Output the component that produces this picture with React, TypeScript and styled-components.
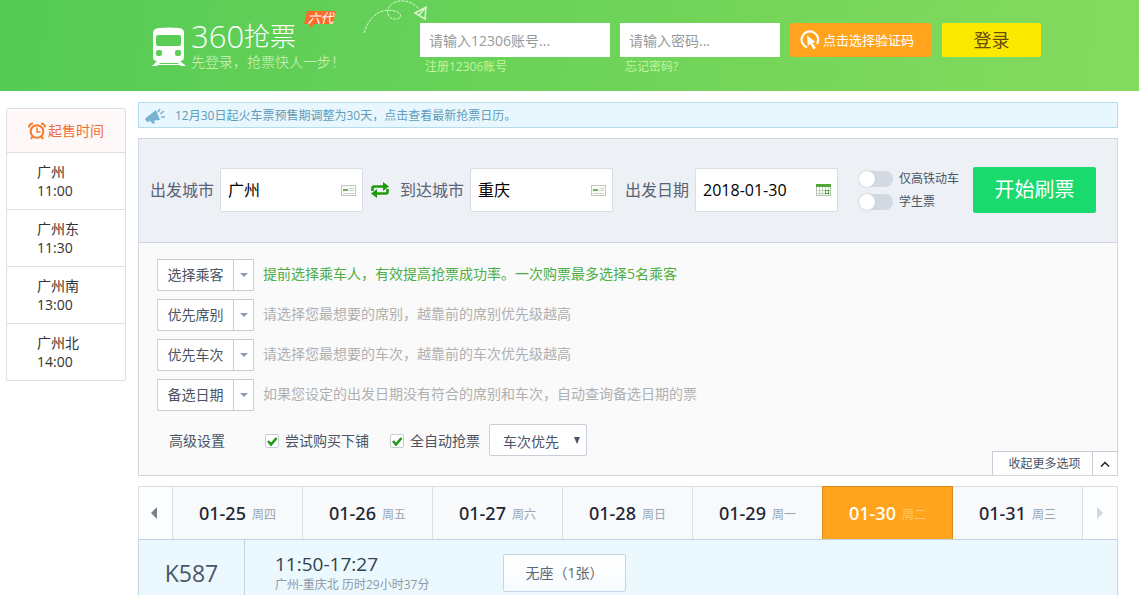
import React, { useState } from "react";
import styled, { createGlobalStyle } from "styled-components";

const GlobalStyle = createGlobalStyle`
  * { box-sizing: border-box; }
  html { scrollbar-width: none; }
  body {
    margin: 0;
    background: #fff;
    color: #333;
    font: 14px/20px "Open Sans", "Noto Sans CJK SC", sans-serif;
    text-spacing-trim: space-all;
  }
  button, input, select { font: inherit; color: inherit; margin: 0; }
  button { cursor: pointer; padding: 0; border: 0; background: none; text-spacing-trim: inherit; }
  a { text-decoration: none; }
  svg { display: block; flex: none; }
  ul { list-style: none; margin: 0; padding: 0; }
`;

const Header = styled.header`
  display: flex;
  align-items: flex-start;
  height: 91px;
  padding: 23px 20px 0 152px;
  background: linear-gradient(100deg, #54cb55, #85db5d);
`;

const Brand = styled.div`
  position: relative;
  display: flex;
  gap: 5px;
  width: 268px;
  flex: none;
  color: #fff;
`;

const TrainIcon = styled.svg`
  margin-top: 4px;
`;

const BrandName = styled.h1`
  margin: 0;
  display: flex;
  align-items: center;
  height: 26px;
  font-size: 26px;
  line-height: 26px;
  font-weight: 300;
`;

const BrandNumber = styled.span`
  font-size: 31px;
`;

const Tagline = styled.p`
  margin: 3px 0 0;
  font-weight: 300;
  color: #d3f5c8;
  white-space: nowrap;
`;

const Badge = styled.span`
  position: absolute;
  left: 152px;
  top: -13px;
  width: 33px;
  height: 18px;
  font-size: 13px;
  line-height: 16px;
  text-align: center;
  font-style: italic;
  svg { position: absolute; inset: 0; z-index: -1; }
  isolation: isolate;
`;

const PlaneTrail = styled.svg`
  position: absolute;
  left: 210px;
  top: -23px;
`;

const LoginForm = styled.form`
  display: flex;
  align-items: flex-start;
  gap: 10px;
`;

const Credential = styled.div<{ $width: number }>`
  width: ${(p) => p.$width}px;
  a {
    display: block;
    margin-left: 5px;
    font-size: 12px;
    line-height: 20px;
    color: #c3f59f;
  }
`;

const CredentialInput = styled.input`
  display: block;
  width: 100%;
  height: 34px;
  padding: 0 9px;
  border: 0;
  background: #fff;
  outline: none;
  &::placeholder { color: #999; opacity: 1; }
`;

const CaptchaButton = styled.button`
  display: flex;
  align-items: center;
  gap: 3px;
  width: 141px;
  height: 34px;
  padding-left: 10px;
  border-radius: 2px;
  background: #ffa41c;
  color: #fff;
  font-size: 13px;
`;

const LoginButton = styled.button`
  width: 99px;
  height: 34px;
  margin-left: 1px;
  border-radius: 2px;
  background: #fbe900;
  color: #6b4a08;
  font-size: 18px;
`;

const Page = styled.div`
  display: flex;
  align-items: flex-start;
  gap: 12px;
  padding: 11px 21px 0 6px;
`;

const Sidebar = styled.aside`
  width: 120px;
  flex: none;
  margin-top: 6px;
  border: 1px solid #dcdfe3;
  border-radius: 2px;
`;

const SidebarTitle = styled.h2`
  display: flex;
  align-items: center;
  gap: 2px;
  height: 43px;
  margin: 0;
  padding-left: 21px;
  background: #fef9f8;
  color: #f26a36;
  font-size: 14px;
  font-weight: 400;
`;

const SaleTime = styled.li`
  padding: 9px 0 9px 30px;
  border-top: 1px solid #dcdfe3;
  line-height: 19px;
  span, time { display: block; }
`;

const Main = styled.main`
  flex: 1;
  min-width: 0;
`;

const Notice = styled.a`
  display: flex;
  align-items: center;
  gap: 9px;
  height: 26px;
  padding: 2px 0 0 6px;
  border: 1px solid #b5dcea;
  background: #e8f7fd;
  color: #5d9cba;
  font-size: 12px;
`;

const Panel = styled.section`
  margin-top: 10px;
  border: 1px solid #cfd6de;
  background: #fafafa;
  color: #4a5466;
`;

const SearchBar = styled.form`
  display: flex;
  align-items: center;
  height: 104px;
  padding: 0 0 1px 11px;
  border-bottom: 1px solid #ccd3dd;
  background: #edf0f5;
`;

const Field = styled.label`
  display: flex;
  align-items: center;
  gap: 6px;
  font-size: 16px;
  color: #5a6375;
  white-space: nowrap;
`;

const FieldBox = styled.span`
  display: flex;
  align-items: center;
  width: 143px;
  height: 44px;
  padding: 0 6px 0 7px;
  border: 1px solid #d9dee6;
  border-radius: 2px;
  background: #fff;
`;

const FieldInput = styled.input`
  flex: 1;
  min-width: 0;
  padding: 0;
  border: 0;
  outline: none;
  background: none;
  color: #000;
`;

const SwapButton = styled.button`
  margin: 0 11px 0 8px;
`;

const DateField = styled(Field)`
  margin-left: 12px;
`;

const Switches = styled.div`
  display: grid;
  gap: 3px;
  margin: 0 14px 0 21px;
`;

const SwitchLabel = styled.label`
  display: flex;
  align-items: center;
  gap: 6px;
  font-size: 12px;
`;

const Switch = styled.input`
  appearance: none;
  display: flex;
  width: 34px;
  height: 16px;
  border-radius: 8px;
  background: #d3d9e2;
  &::before {
    content: "";
    width: 16px;
    height: 16px;
    border-radius: 50%;
    background: #fff;
    box-shadow: 0 0 2px #b4bcc8;
  }
  &:checked { background: #16da6d; justify-content: flex-end; }
`;

const StartButton = styled.button`
  width: 123px;
  height: 46px;
  border-radius: 2px;
  background: #18da6d;
  color: #fff;
  font-size: 20px;
`;

const Options = styled.div`
  padding: 16px 0 0 18px;
`;

const OptionRows = styled.div`
  display: grid;
  gap: 8px;
`;

const OptionRow = styled.div`
  display: flex;
  gap: 9px;
`;

const OptionButton = styled.button`
  display: flex;
  align-items: stretch;
  width: 97px;
  height: 32px;
  border: 1px solid #c6ced9;
  background: #fff;
  line-height: 30px;
`;

const OptionName = styled.span`
  flex: 1;
`;

const OptionArrow = styled.span`
  display: flex;
  align-items: center;
  justify-content: center;
  width: 20px;
  border-left: 1px solid #c6ced9;
`;

const Hint = styled.span<{ $active?: boolean }>`
  line-height: 30px;
  color: ${(p) => (p.$active ? "#4cae45" : "#b0b0b0")};
`;

const Advanced = styled.div`
  display: flex;
  align-items: flex-start;
  height: 51px;
  margin-top: 13px;
  line-height: 34px;
`;

const AdvancedTitle = styled.span`
  margin: 0 40px 0 12px;
`;

const CheckLabel = styled.label`
  display: flex;
  align-items: center;
  gap: 6px;
  margin-right: 21px;
  & + & { margin-right: 9px; }
`;

const CheckMark = styled.span`
  display: grid;
  width: 14px;
  height: 14px;
  > * { grid-area: 1 / 1; }
  svg { pointer-events: none; visibility: hidden; }
  input:checked + svg { visibility: visible; }
`;

const CheckInput = styled.input`
  appearance: none;
  width: 14px;
  height: 14px;
  border: 1px solid #c9ced6;
  border-radius: 2px;
  background: #fff;
`;

const SelectBox = styled.span`
  display: grid;
  align-items: center;
  width: 98px;
  > * { grid-area: 1 / 1; }
  svg { justify-self: end; margin-right: 7px; pointer-events: none; }
`;

const Select = styled.select`
  appearance: none;
  width: 100%;
  height: 32px;
  padding: 0 13px;
  border: 1px solid #c9cfd8;
  border-radius: 2px;
  background: #fff;
`;

const CollapseButton = styled.button`
  display: flex;
  align-self: flex-end;
  width: 125px;
  height: 24px;
  margin-left: auto;
  border: solid #c6ced9;
  border-width: 1px 0 0 1px;
  background: #fff;
  font-size: 12px;
  line-height: 24px;
`;

const CollapseText = styled.span`
  flex: 1;
  padding-left: 4px;
`;

const CollapseArrow = styled.span`
  display: flex;
  align-items: center;
  justify-content: center;
  width: 25px;
  border-left: 1px solid #c6ced9;
`;

const DateBar = styled.nav`
  display: flex;
  height: 54px;
  margin-top: 10px;
  border: 1px solid #d8dee5;
  border-bottom-color: #c3d3e3;
`;

const PageArrow = styled.button<{ $next?: boolean }>`
  display: flex;
  align-items: center;
  justify-content: center;
  width: ${(p) => (p.$next ? 35 : 33)}px;
  padding-right: ${(p) => (p.$next ? 0 : 3)}px;
  border-left: ${(p) => (p.$next ? "1px solid #d8dee5" : "0")};
  background: #fcfdfe;
`;

const DateTab = styled.button<{ $active: boolean }>`
  display: flex;
  flex: 1;
  align-items: center;
  justify-content: center;
  gap: 6px;
  position: relative;
  z-index: ${(p) => (p.$active ? 1 : 0)};
  border-left: 1px solid ${(p) => (p.$active ? "#d68b1d" : "#d8dee5")};
  background: ${(p) => (p.$active ? "#ffa41c" : "#f8f9fb")};
  box-shadow: ${(p) => (p.$active ? "1px -1px 0 #d68b1d, 0 -1px 0 #d68b1d, 1px 0 0 #d68b1d" : "none")};
  color: ${(p) => (p.$active ? "#fff" : "#1f2833")};
  font-family: "Noto Sans", "Noto Sans CJK SC", sans-serif;
  font-size: 18px;
  font-weight: 500;
  small {
    margin-top: 4px;
    font-size: 12px;
    font-weight: 400;
    color: ${(p) => (p.$active ? "#ffc873" : "#9aa5b1")};
  }
`;

const Train = styled.article`
  display: flex;
  height: 67px;
  border: solid #c3d3e3;
  border-width: 0 1px 1px;
  background: #ebf8fe;
`;

const TrainNumber = styled.h3`
  width: 106px;
  margin: 0;
  border-right: 1px solid #c3d3e3;
  text-align: center;
  font-size: 23px;
  line-height: 66px;
  font-weight: 400;
  color: #4a5664;
`;

const TrainTimes = styled.div`
  width: 228px;
  padding: 14px 0 0 30px;
  color: #34404e;
  font-size: 19px;
  line-height: 20px;
  p { margin: 0; font-size: 12px; line-height: 22px; color: #8c99a6; }
`;

const SeatButton = styled.button`
  width: 123px;
  height: 38px;
  margin: 14px 0 0 30px;
  border: 1px solid #c4d5e6;
  border-radius: 2px;
  background: linear-gradient(#fff, #f7fbfe);
  color: #5d6773;
`;

const CardIcon = () => (
  <svg width="15" height="11" viewBox="0 0 15 11">
    <rect x=".5" y=".5" width="14" height="10" fill="#fbfcfa" stroke="#c3c8bf" />
    <path d="M2 4h5v2H2z" fill="#6fae5a" />
    <path d="M8 3.500h5M8 5.500h5M2 8.500h11" stroke="#cdd5c8" />
  </svg>
);

const CalendarIcon = () => (
  <svg width="15" height="12" viewBox="0 0 15 12">
    <rect x=".5" y=".5" width="14" height="11" fill="#fff" stroke="#b5c2ae" />
    <path d="M0 0h15v3H0z" fill="#51a637" />
    <path d="M3.500 3v9M6.500 3v9M9.500 3v9M12.500 3v9M0 6.500h15M0 9.500h15" stroke="#c3cfbd" />
    <rect x="9.500" y="6.500" width="3" height="3" fill="#fff" stroke="#51a637" />
  </svg>
);

const Caret = ({ color, w = 8, h = 4 }: { color: string; w?: number; h?: number }) => (
  <svg width={w} height={h} viewBox={`0 0 ${w} ${h}`}>
    <path d={`M0 0h${w}L${w / 2} ${h}z`} fill={color} />
  </svg>
);

const Tick = () => (
  <svg width="14" height="14" viewBox="0 0 14 14">
    <path d="M3 7l3 3.500L11.500 4" fill="none" stroke="#1c9a12" strokeWidth="2.500" />
  </svg>
);

const saleTimes = [
  ["广州", "11:00"],
  ["广州东", "11:30"],
  ["广州南", "13:00"],
  ["广州北", "14:00"],
];

const options = [
  ["选择乘客", "提前选择乘车人，有效提高抢票成功率。一次购票最多选择5名乘客"],
  ["优先席别", "请选择您最想要的席别，越靠前的席别优先级越高"],
  ["优先车次", "请选择您最想要的车次，越靠前的车次优先级越高"],
  ["备选日期", "如果您设定的出发日期没有符合的席别和车次，自动查询备选日期的票"],
];

const dates = [
  ["01-25", "周四"],
  ["01-26", "周五"],
  ["01-27", "周六"],
  ["01-28", "周日"],
  ["01-29", "周一"],
  ["01-30", "周二"],
  ["01-31", "周三"],
];

export default function App() {
  const [day, setDay] = useState("01-30");
  return (
    <>
      <GlobalStyle />
      <Header>
        <Brand>
          <TrainIcon width="34" height="40" viewBox="0 0 34 40" fill="#fff">
            <path
              fillRule="evenodd"
              d="M7 1Q17 0 27 1Q32 1.500 32 6V30Q32 34 28 34H5Q1 34 1 30V6Q1 1.500 7 1ZM6 8Q4 8 4 10V17Q4 19 6 19H27Q29 19 29 17V10Q29 8 27 8ZM6 23Q4 23 4 25V27Q4 29 6 29H8Q10 29 10 27V25Q10 23 8 23ZM25 23Q23 23 23 25V27Q23 29 25 29H27Q29 29 29 27V25Q29 23 27 23Z"
            />
            <path d="M5 34L0 39H5L8 36H26L29 39H34L28 34Z" />
            <path d="M5 37.500H29" stroke="#fff" />
          </TrainIcon>
          <div>
            <BrandName>
              <BrandNumber>360</BrandNumber>抢票
            </BrandName>
            <Tagline>先登录，抢票快人一步！</Tagline>
          </div>
          <Badge>
            <svg width="33" height="20" viewBox="0 0 33 20">
              <path d="M3 1H32L29 14H10L6 18V14H0Z" fill="#fd6b2b" />
            </svg>
            六代
          </Badge>
          <PlaneTrail width="68" height="36" viewBox="0 0 68 36" fill="none" stroke="#d9f7cf">
            <path d="M2 33C8 14 20 8 33 11C40 13 40 18 35 19C28 20 23 14 27 7C33 -2 49 -1 57 9" strokeDasharray="3 1" />
            <path d="M53 13L64 7L63 19ZM64 7L57 15L63 19" strokeWidth="1.500" />
          </PlaneTrail>
        </Brand>
        <LoginForm onSubmit={(e) => e.preventDefault()}>
          <Credential $width={190}>
            <CredentialInput type="text" aria-label="12306账号" placeholder="请输入12306账号..." />
            <a href="#register">注册12306账号</a>
          </Credential>
          <Credential $width={160}>
            <CredentialInput type="password" aria-label="密码" placeholder="请输入密码..." />
            <a href="#forgot">忘记密码?</a>
          </Credential>
          <CaptchaButton type="button">
            <svg width="20" height="20" viewBox="0 0 20 20">
              <path d="M7 17.500A8.300 8.300 0 1 1 17 14" fill="none" stroke="#fff" strokeWidth="2.200" />
              <path d="M7 5.500L15.500 12L12.500 12.800L16 18L13.500 19.500L10.500 14L7.800 16Z" fill="#fff" />
            </svg>
            点击选择验证码
          </CaptchaButton>
          <LoginButton type="submit">登录</LoginButton>
        </LoginForm>
      </Header>

      <Page>
        <Sidebar>
          <SidebarTitle>
            <svg width="18" height="18" viewBox="0 0 18 18" fill="none" stroke="#f47b2b" strokeWidth="2">
              <circle cx="9" cy="9.500" r="6.300" />
              <path d="M9 5.500V10H12.500" strokeWidth="1.500" />
              <path d="M1 5.500Q1 2 5 1.500M17 5.500Q17 2 13 1.500M4.500 14.500L3 17M13.500 14.500L15 17" />
            </svg>
            起售时间
          </SidebarTitle>
          <ul>
            {saleTimes.map(([station, time]) => (
              <SaleTime key={station}>
                <span>{station}</span>
                <time>{time}</time>
              </SaleTime>
            ))}
          </ul>
        </Sidebar>

        <Main>
          <Notice href="#calendar">
            <svg width="21" height="17" viewBox="0 0 21 17">
              <path d="M0 11L2 9L11 2L15 12L9 12.500L10 15.500H7L5.500 13L2 14Z" fill="#78b2d2" />
              <path d="M13 4L15 1M15 6L19 3M16 9H20" stroke="#78b2d2" strokeWidth="1.500" />
            </svg>
            12月30日起火车票预售期调整为30天，点击查看最新抢票日历。
          </Notice>

          <Panel>
            <SearchBar onSubmit={(e) => e.preventDefault()}>
              <Field>
                出发城市
                <FieldBox>
                  <FieldInput defaultValue="广州" />
                  <CardIcon />
                </FieldBox>
              </Field>
              <SwapButton type="button" aria-label="交换城市">
                <svg width="18" height="16" viewBox="0 0 18 16" fill="none" stroke="#1f9a0c" strokeWidth="2.600">
                  <path d="M1.500 9V6Q1.500 4.500 3 4.500H13M16.500 7V10Q16.500 11.500 15 11.500H5" />
                  <path d="M12 0L18 4.500L12 9ZM6 7L0 11.500L6 16Z" fill="#1f9a0c" stroke="none" />
                </svg>
              </SwapButton>
              <Field>
                到达城市
                <FieldBox>
                  <FieldInput defaultValue="重庆" />
                  <CardIcon />
                </FieldBox>
              </Field>
              <DateField>
                出发日期
                <FieldBox>
                  <FieldInput defaultValue="2018-01-30" />
                  <CalendarIcon />
                </FieldBox>
              </DateField>
              <Switches>
                <SwitchLabel>
                  <Switch type="checkbox" />
                  仅高铁动车
                </SwitchLabel>
                <SwitchLabel>
                  <Switch type="checkbox" />
                  学生票
                </SwitchLabel>
              </Switches>
              <StartButton type="submit">开始刷票</StartButton>
            </SearchBar>

            <Options>
              <OptionRows>
                {options.map(([name, hint], i) => (
                  <OptionRow key={name}>
                    <OptionButton type="button">
                      <OptionName>{name}</OptionName>
                      <OptionArrow>
                        <Caret color="#8c9cae" />
                      </OptionArrow>
                    </OptionButton>
                    <Hint $active={i === 0}>{hint}</Hint>
                  </OptionRow>
                ))}
              </OptionRows>
              <Advanced>
                <AdvancedTitle>高级设置</AdvancedTitle>
                {["尝试购买下铺", "全自动抢票"].map((text) => (
                  <CheckLabel key={text}>
                    <CheckMark>
                      <CheckInput type="checkbox" defaultChecked />
                      <Tick />
                    </CheckMark>
                    {text}
                  </CheckLabel>
                ))}
                <SelectBox>
                  <Select aria-label="优先方式">
                    <option>车次优先</option>
                    <option>席别优先</option>
                  </Select>
                  <Caret color="#4a5466" w={6} h={7} />
                </SelectBox>
                <CollapseButton type="button">
                  <CollapseText>收起更多选项</CollapseText>
                  <CollapseArrow>
                    <svg width="10" height="6" viewBox="0 0 10 6" fill="none" stroke="#222" strokeWidth="1.500">
                      <path d="M1 5.500L5 1.500L9 5.500" />
                    </svg>
                  </CollapseArrow>
                </CollapseButton>
              </Advanced>
            </Options>
          </Panel>

          <DateBar aria-label="日期">
            <PageArrow type="button" aria-label="前一天">
              <svg width="6" height="12" viewBox="0 0 6 12">
                <path d="M6 0V12L0 6Z" fill="#7c8187" />
              </svg>
            </PageArrow>
            {dates.map(([date, week]) => (
              <DateTab key={date} type="button" $active={date === day} onClick={() => setDay(date)}>
                {date}
                <small>{week}</small>
              </DateTab>
            ))}
            <PageArrow type="button" aria-label="后一天" $next>
              <svg width="6" height="12" viewBox="0 0 6 12">
                <path d="M0 0V12L6 6Z" fill="#d3d7db" />
              </svg>
            </PageArrow>
          </DateBar>

          <Train>
            <TrainNumber>K587</TrainNumber>
            <TrainTimes>
              11:50-17:27
              <p>广州-重庆北 历时29小时37分</p>
            </TrainTimes>
            <SeatButton type="button">无座（1张）</SeatButton>
          </Train>
        </Main>
      </Page>
    </>
  );
}
